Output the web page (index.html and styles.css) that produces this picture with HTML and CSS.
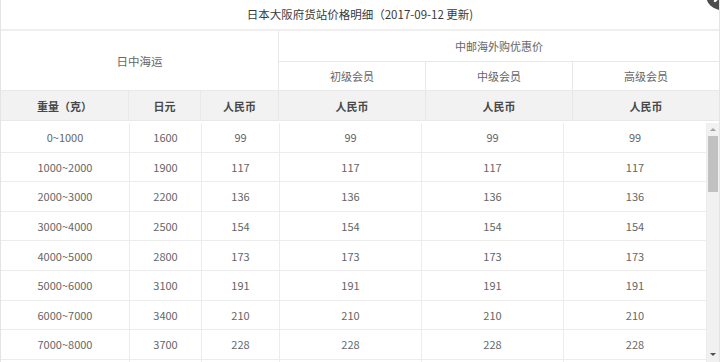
FILE: index.html
```html
<!DOCTYPE html>
<html lang="zh-CN">
<head>
<meta charset="utf-8">
<title>日本大阪府货站价格明细</title>
<link rel="stylesheet" href="styles.css">
</head>
<body>
<div class="layer">
  <div class="title">日本大阪府货站价格明细（2017-09-12 更新)</div>
  <span class="close"><svg width="30" height="30" viewBox="0 0 30 30"><circle cx="15" cy="15" r="15" fill="#4d4d4d"/><path d="M9 9 L21 21 M21 9 L9 21" stroke="#fff" stroke-width="2.4" stroke-linecap="round"/></svg></span>
  <div class="head">
    <div class="cell span-left">日中海运</div>
    <div class="cell span-right">中邮海外购优惠价</div>
    <div class="cell">初级会员</div>
    <div class="cell">中级会员</div>
    <div class="cell last">高级会员</div>
    <div class="cell th">重量（克）</div>
    <div class="cell th">日元</div>
    <div class="cell th">人民币</div>
    <div class="cell th">人民币</div>
    <div class="cell th">人民币</div>
    <div class="cell th last">人民币</div>
  </div>
  <div class="body">
    <div class="rows">
      <div class="row"><div class="td">0~1000</div><div class="td">1600</div><div class="td">99</div><div class="td">99</div><div class="td">99</div><div class="td">99</div></div>
      <div class="row"><div class="td">1000~2000</div><div class="td">1900</div><div class="td">117</div><div class="td">117</div><div class="td">117</div><div class="td">117</div></div>
      <div class="row"><div class="td">2000~3000</div><div class="td">2200</div><div class="td">136</div><div class="td">136</div><div class="td">136</div><div class="td">136</div></div>
      <div class="row"><div class="td">3000~4000</div><div class="td">2500</div><div class="td">154</div><div class="td">154</div><div class="td">154</div><div class="td">154</div></div>
      <div class="row"><div class="td">4000~5000</div><div class="td">2800</div><div class="td">173</div><div class="td">173</div><div class="td">173</div><div class="td">173</div></div>
      <div class="row"><div class="td">5000~6000</div><div class="td">3100</div><div class="td">191</div><div class="td">191</div><div class="td">191</div><div class="td">191</div></div>
      <div class="row"><div class="td">6000~7000</div><div class="td">3400</div><div class="td">210</div><div class="td">210</div><div class="td">210</div><div class="td">210</div></div>
      <div class="row"><div class="td">7000~8000</div><div class="td">3700</div><div class="td">228</div><div class="td">228</div><div class="td">228</div><div class="td">228</div></div>
      <div class="row"><div class="td"></div><div class="td"></div><div class="td"></div><div class="td"></div><div class="td"></div><div class="td"></div></div>
    </div>
    <div class="scrollbar">
      <span class="arrow up"></span>
      <span class="thumb"></span>
      <span class="arrow down"></span>
    </div>
  </div>
</div>
</body>
</html>
```
FILE: styles.css
```css
html, body {
  margin: 0;
  padding: 0;
  background: #fff;
}
body {
  font-family: "Noto Sans CJK SC", "Noto Sans", sans-serif;
  font-size: 11px;
  color: #666;
}
.layer {
  position: relative;
  width: 720px;
  height: 362px;
  box-sizing: border-box;
  overflow: hidden;
  border-left: 1px solid #e4e4e4;
  border-right: 1px solid #e4e4e4;
  display: flex;
  flex-direction: column;
}
.title {
  height: 29px;
  line-height: 29px;
  text-align: center;
  font-size: 11.5px;
  color: #3a3a3a;
  border-bottom: 2px solid #efefef;
  flex: none;
}
.close {
  position: absolute;
  right: -17px;
  top: -20px;
  width: 30px;
  height: 30px;
}
.close svg {
  display: block;
}
.head {
  display: grid;
  grid-template-columns: 128px 72px 78px 147px 147px 1fr;
  grid-template-rows: 31px 29px 30px;
  flex: none;
}
.cell {
  box-sizing: border-box;
  display: flex;
  align-items: center;
  justify-content: center;
  border-right: 1px solid #e8e8e8;
  border-bottom: 1px solid #e8e8e8;
  color: #666;
}
.cell.last {
  border-right: none;
}
.span-left {
  grid-column: 1 / 4;
  grid-row: 1 / 3;
  font-size: 11.5px;
}
.span-right {
  grid-column: 4 / 7;
  border-right: none;
}
.th {
  background: #f2f2f2;
  font-weight: bold;
  color: #484848;
}
.body {
  display: flex;
  margin-top: 2px;
  flex: 1;
  min-height: 0;
}
.rows {
  width: 706px;
  flex: none;
}
.row {
  display: grid;
  grid-template-columns: 129px 72px 78px 142px 142px 143px;
  height: 29.6px;
}
.td {
  box-sizing: border-box;
  display: flex;
  align-items: center;
  justify-content: center;
  border-right: 1px solid #ececec;
  border-bottom: 1px solid #ececec;
  color: #666;
}
.scrollbar {
  flex: 1;
  background: #f1f1f1;
  display: flex;
  flex-direction: column;
  align-items: center;
  position: relative;
}
.arrow {
  width: 0;
  height: 0;
  border-left: 3.5px solid transparent;
  border-right: 3.5px solid transparent;
}
.arrow.up {
  margin-top: 5px;
  border-bottom: 3.5px solid #a3a3a3;
}
.thumb {
  margin-top: 5px;
  width: 10px;
  height: 56px;
  background: #c1c1c1;
}
.arrow.down {
  margin-top: auto;
  margin-bottom: 6px;
  border-top: 3.5px solid #505050;
}
```
